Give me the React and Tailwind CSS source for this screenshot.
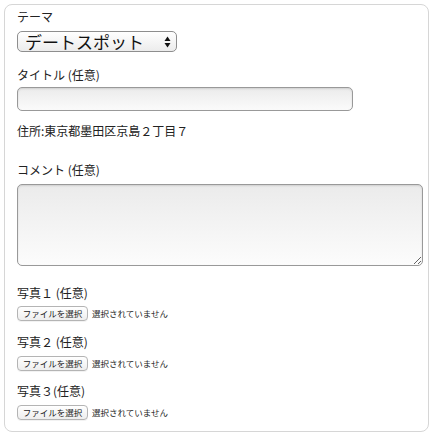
import React from 'react';

const font = { fontFamily: '"Lucida Grande", "Noto Sans CJK JP", sans-serif' };

function Label({ children, className = '' }) {
  return <div className={`text-[12px] leading-[16px] text-[#222] ${className}`}>{children}</div>;
}

function FileRow({ className = '' }) {
  return (
    <div className={`flex items-center h-[16px] ${className}`}>
      <div className="h-[15px] w-[71px] flex items-center justify-center rounded-[4px] border border-[#b4b4b4] bg-gradient-to-b from-white to-[#eeeeee] text-[8.5px] text-[#222] shadow-[0_1px_0_rgba(0,0,0,0.05)]">
        ファイルを選択
      </div>
      <span className="ml-[4px] text-[8.5px] text-[#222]">選択されていません</span>
    </div>
  );
}

export default function App() {
  return (
    <div className="w-[433px] h-[435px] bg-white p-[4px] pb-[3px]" style={font}>
      <div className="h-[428px] w-[425px] rounded-[8px] border border-[#d6d6d6] px-[12px] pt-[4px]">
        <Label>テーマ</Label>

        <div className="mt-[6px] h-[21px] w-[160px] rounded-[5px] border border-[#8e8e8e] bg-gradient-to-b from-white to-[#ececec] flex items-center justify-between pl-[7px] pr-[5px]">
          <span className="text-[17px] leading-[19px] text-[#111]">デートスポット</span>
          <svg width="7" height="12" viewBox="0 0 7 12">
            <path d="M3.5 0.5 L6.5 5 L0.5 5 Z" fill="#111" />
            <path d="M3.5 11.5 L6.5 7 L0.5 7 Z" fill="#111" />
          </svg>
        </div>

        <Label className="mt-[15px]">タイトル (任意)</Label>
        <input
          type="text"
          className="mt-[4px] block h-[24px] w-[336px] rounded-[5px] border border-[#999] bg-gradient-to-b from-[#ebebeb] to-[#fbfbfb] shadow-[inset_0_1px_2px_rgba(0,0,0,0.12)] outline-none"
        />

        <Label className="mt-[12px]">住所:東京都墨田区京島２丁目７</Label>

        <Label className="mt-[23px]">コメント (任意)</Label>
        <textarea
          className="mt-[6px] block h-[82px] w-[406px] rounded-[5px] border border-[#999] bg-gradient-to-b from-[#ebebeb] to-[#fcfcfc] shadow-[inset_0_1px_2px_rgba(0,0,0,0.12)] outline-none"
        />

        <Label className="mt-[19px]">写真１ (任意)</Label>
        <FileRow className="mt-[4px]" />

        <Label className="mt-[13px]">写真２ (任意)</Label>
        <FileRow className="mt-[5px]" />

        <Label className="mt-[12px]">写真３(任意)</Label>
        <FileRow className="mt-[5px]" />
      </div>
    </div>
  );
}
